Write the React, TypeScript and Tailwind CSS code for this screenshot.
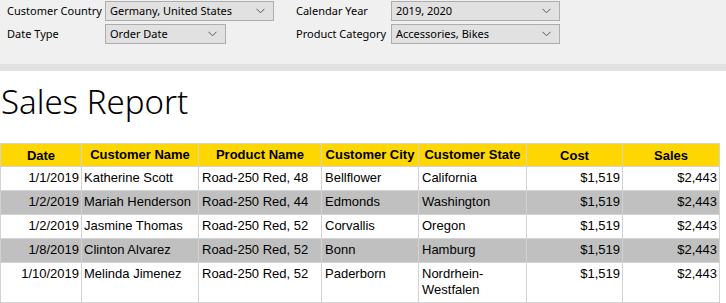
import React from 'react';

const rows = [
  { date: '1/1/2019', name: 'Katherine Scott', product: 'Road-250 Red, 48', city: 'Bellflower', state: 'California', cost: '$1,519', sales: '$2,443' },
  { date: '1/2/2019', name: 'Mariah Henderson', product: 'Road-250 Red, 44', city: 'Edmonds', state: 'Washington', cost: '$1,519', sales: '$2,443' },
  { date: '1/2/2019', name: 'Jasmine Thomas', product: 'Road-250 Red, 52', city: 'Corvallis', state: 'Oregon', cost: '$1,519', sales: '$2,443' },
  { date: '1/8/2019', name: 'Clinton Alvarez', product: 'Road-250 Red, 52', city: 'Bonn', state: 'Hamburg', cost: '$1,519', sales: '$2,443' },
  { date: '1/10/2019', name: 'Melinda Jimenez', product: 'Road-250 Red, 52', city: 'Paderborn', state: 'Nordrhein-Westfalen', cost: '$1,519', sales: '$2,443' },
];

const Chevron = () => (
  <svg width="9" height="6" viewBox="0 0 9 6" className="text-[#555]">
    <path d="M0.5 0.8 L4.5 4.8 L8.5 0.8" fill="none" stroke="currentColor" strokeWidth="1" />
  </svg>
);

const Select: React.FC<{ value: string; width: string }> = ({ value, width }) => (
  <div className={`${width} h-[20px] flex items-center justify-between bg-[#e1e1e1] border border-[#adadad] pl-[4px] pr-[8px] text-[11px] text-black whitespace-nowrap`}>
    <span>{value}</span>
    <Chevron />
  </div>
);

const Param: React.FC<{ label: string; labelWidth: string; children: React.ReactNode }> = ({ label, labelWidth, children }) => (
  <div className="flex items-center">
    <span className={`${labelWidth} text-[11px] text-black whitespace-nowrap`}>{label}</span>
    {children}
  </div>
);

export default function App() {
  return (
    <div className="w-[726px] h-[303px] overflow-hidden bg-white" style={{ fontFamily: '"Noto Sans", sans-serif' }}>
      <div className="h-[64px] bg-[#f0f0f0] pl-[7px] pt-[1px] flex gap-[22px]">
        <div className="flex flex-col gap-[3px]">
          <Param label="Customer Country" labelWidth="w-[98px]">
            <Select value="Germany, United States" width="w-[169px]" />
          </Param>
          <Param label="Date Type" labelWidth="w-[98px]">
            <Select value="Order Date" width="w-[121px]" />
          </Param>
        </div>
        <div className="flex flex-col gap-[3px]">
          <Param label="Calendar Year" labelWidth="w-[95px]">
            <Select value="2019, 2020" width="w-[169px]" />
          </Param>
          <Param label="Product Category" labelWidth="w-[95px]">
            <Select value="Accessories, Bikes" width="w-[169px]" />
          </Param>
        </div>
      </div>
      <div className="h-[7px] bg-[#e1e1e1]" />
      <h1 className="pl-[1px] pt-[8px] h-[72px] text-[33px] leading-[46px] font-light text-black">Sales Report</h1>
      <table className="table-fixed border-collapse w-[719px] text-[13px] text-black" style={{ fontFamily: '"Liberation Sans", Arial, sans-serif' }}>
        <colgroup>
          <col className="w-[81px]" />
          <col className="w-[117px]" />
          <col className="w-[123px]" />
          <col className="w-[97px]" />
          <col className="w-[108px]" />
          <col className="w-[96px]" />
          <col className="w-[97px]" />
        </colgroup>
        <thead>
          <tr className="bg-[#ffd700] h-[23px] font-bold">
            <th className="border border-[#d3d3d3] text-center pt-[2px]">Date</th>
            <th className="border border-[#d3d3d3] text-center">Customer Name</th>
            <th className="border border-[#d3d3d3] text-center">Product Name</th>
            <th className="border border-[#d3d3d3] text-center">Customer City</th>
            <th className="border border-[#d3d3d3] text-center">Customer State</th>
            <th className="border border-[#d3d3d3] text-center pt-[2px]">Cost</th>
            <th className="border border-[#d3d3d3] text-center pt-[2px]">Sales</th>
          </tr>
        </thead>
        <tbody>
          {rows.map((r, i) => (
            <tr key={i} className={i % 2 === 1 ? 'bg-[#c0c0c0]' : 'bg-white'}>
              <td className="border border-[#d3d3d3] align-top text-right px-[2px] pt-[3px] pb-[4px] leading-[16px]">{r.date}</td>
              <td className="border border-[#d3d3d3] align-top px-[2px] pt-[3px] pb-[4px] leading-[16px] whitespace-nowrap">{r.name}</td>
              <td className="border border-[#d3d3d3] align-top px-[3px] pt-[3px] pb-[4px] leading-[16px]">{r.product}</td>
              <td className="border border-[#d3d3d3] align-top px-[3px] pt-[3px] pb-[4px] leading-[16px]">{r.city}</td>
              <td className="border border-[#d3d3d3] align-top px-[3px] pt-[3px] pb-[4px] leading-[16px]">
                {r.state === 'Nordrhein-Westfalen' ? (
                  <>Nordrhein-<br />Westfalen</>
                ) : (
                  r.state
                )}
              </td>
              <td className="border border-[#d3d3d3] align-top text-right px-[2px] pt-[3px] pb-[4px] leading-[16px]">{r.cost}</td>
              <td className="border border-[#d3d3d3] align-top text-right px-[2px] pt-[3px] pb-[4px] leading-[16px]">{r.sales}</td>
            </tr>
          ))}
          <tr className="bg-[#c0c0c0] h-[23px]">
            <td className="border border-[#d3d3d3]" colSpan={7}></td>
          </tr>
        </tbody>
      </table>
    </div>
  );
}
